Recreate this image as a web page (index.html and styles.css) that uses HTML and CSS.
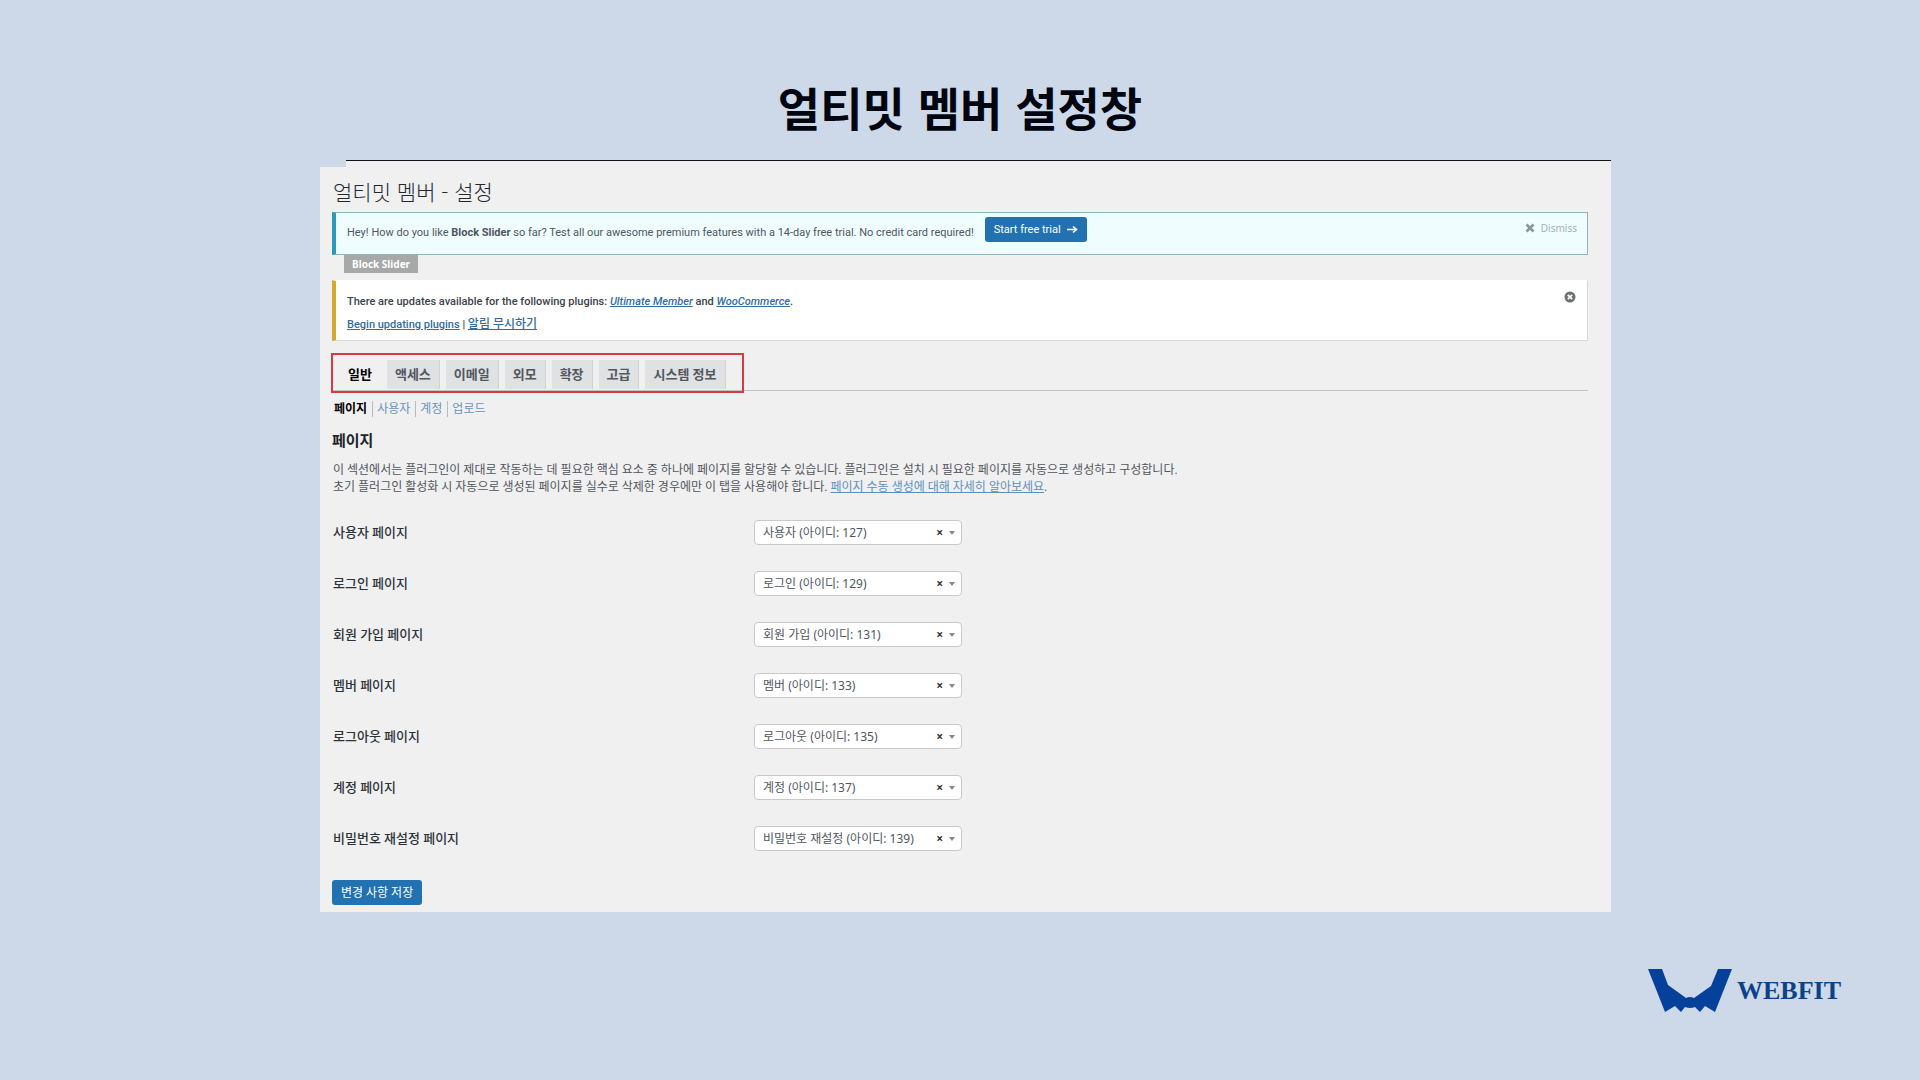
FILE: index.html
```html
<!DOCTYPE html>
<html lang="ko">
<head>
<meta charset="utf-8">
<title>얼티밋 멤버 설정창</title>
<link rel="stylesheet" href="styles.css">
</head>
<body>
<h1 class="slide-title">얼티밋 멤버 설정창</h1>
<main class="frame">
  <div class="rule"></div>
  <div class="panel">
    <h2 class="page-title">얼티밋 멤버 - 설정</h2>

    <section class="notice notice-info">
      <p>Hey! How do you like <strong>Block Slider</strong> so far? Test all our awesome premium features with a 14-day free trial. No credit card required!</p>
      <button type="button" class="btn btn-trial">Start free trial
        <svg width="11" height="9" viewBox="0 0 11 9"><path d="M0 4.5H9M6 1.5L9.5 4.5L6 7.5" fill="none" stroke="currentColor" stroke-width="1.6"/></svg>
      </button>
      <button type="button" class="dismiss">
        <svg width="10" height="10" viewBox="0 0 10 10"><path d="M1.5 1.5L8.5 8.5M8.5 1.5L1.5 8.5" stroke="#8b9698" stroke-width="2.6"/></svg>
        Dismiss
      </button>
    </section>
    <span class="notice-tag">Block Slider</span>

    <section class="notice notice-warning">
      <div class="notice-body">
        <p>There are updates available for the following plugins: <a href="#" class="plugin">Ultimate Member</a> and <a href="#" class="plugin">WooCommerce</a>.</p>
        <p><a href="#">Begin updating plugins</a> | <a href="#" class="ignore">알림 무시하기</a></p>
      </div>
      <button type="button" class="close" aria-label="닫기">
        <svg width="12" height="12" viewBox="0 0 12 12"><circle cx="6" cy="6" r="5.5" fill="#6d7073"/><path d="M3.8 3.8L8.2 8.2M8.2 3.8L3.8 8.2" stroke="#fff" stroke-width="1.8"/></svg>
      </button>
    </section>

    <div class="tab-row">
      <nav class="tabs">
        <a href="#" class="tab active">일반</a>
        <a href="#" class="tab">액세스</a>
        <a href="#" class="tab">이메일</a>
        <a href="#" class="tab">외모</a>
        <a href="#" class="tab">확장</a>
        <a href="#" class="tab">고급</a>
        <a href="#" class="tab">시스템 정보</a>
      </nav>
    </div>
    <nav class="subnav">
      <a href="#" class="current">페이지</a><a href="#">사용자</a><a href="#">계정</a><a href="#">업로드</a>
    </nav>

    <h3 class="section-title">페이지</h3>
    <p class="description">이 섹션에서는 플러그인이 제대로 작동하는 데 필요한 핵심 요소 중 하나에 페이지를 할당할 수 있습니다. 플러그인은 설치 시 필요한 페이지를 자동으로 생성하고 구성합니다.<br>초기 플러그인 활성화 시 자동으로 생성된 페이지를 실수로 삭제한 경우에만 이 탭을 사용해야 합니다. <a href="#">페이지 수동 생성에 대해 자세히 알아보세요</a>.</p>

    <form class="settings">
      <div class="row"><label for="p-user">사용자 페이지</label>
        <div class="field"><select id="p-user"><option>사용자 (아이디: 127)</option></select><button type="button" class="clear" aria-label="지우기">×</button><span class="caret"></span></div></div>
      <div class="row"><label for="p-login">로그인 페이지</label>
        <div class="field"><select id="p-login"><option>로그인 (아이디: 129)</option></select><button type="button" class="clear" aria-label="지우기">×</button><span class="caret"></span></div></div>
      <div class="row"><label for="p-register">회원 가입 페이지</label>
        <div class="field"><select id="p-register"><option>회원 가입 (아이디: 131)</option></select><button type="button" class="clear" aria-label="지우기">×</button><span class="caret"></span></div></div>
      <div class="row"><label for="p-members">멤버 페이지</label>
        <div class="field"><select id="p-members"><option>멤버 (아이디: 133)</option></select><button type="button" class="clear" aria-label="지우기">×</button><span class="caret"></span></div></div>
      <div class="row"><label for="p-logout">로그아웃 페이지</label>
        <div class="field"><select id="p-logout"><option>로그아웃 (아이디: 135)</option></select><button type="button" class="clear" aria-label="지우기">×</button><span class="caret"></span></div></div>
      <div class="row"><label for="p-account">계정 페이지</label>
        <div class="field"><select id="p-account"><option>계정 (아이디: 137)</option></select><button type="button" class="clear" aria-label="지우기">×</button><span class="caret"></span></div></div>
      <div class="row"><label for="p-reset">비밀번호 재설정 페이지</label>
        <div class="field"><select id="p-reset"><option>비밀번호 재설정 (아이디: 139)</option></select><button type="button" class="clear" aria-label="지우기">×</button><span class="caret"></span></div></div>
      <button type="submit" class="btn btn-save">변경 사항 저장</button>
    </form>
  </div>
</main>
<footer class="brand">
  <svg width="84" height="44" viewBox="0 0 84 44"><path d="M0 0H14L20 16L38 29Q42 27 46 29L63 17L70 0H84L67 43L57 37L52 43L47 38Q42 40 37 38L33 43L27 37L17 43Z" fill="#05409a"/></svg>
  <span>WEBFIT</span>
</footer>
</body>
</html>
```

FILE: styles.css
```css
* { box-sizing: border-box; }

body {
  margin: 0;
  min-height: 100vh;
  background: #cdd9e9;
  color: #50575e;
  font: 12px/16px Roboto, "Noto Sans CJK KR", sans-serif;
}

h1, h2, h3, p { margin: 0; }
button, select { font: inherit; }
button { cursor: pointer; }
a { color: #2f6ea3; }

.slide-title {
  padding: 70px 0 18px;
  color: #000610;
  font: 700 46px/72px "Noto Sans CJK KR", sans-serif;
  text-align: center;
}

.frame { padding: 0 309px 0 320px; }

.rule {
  height: 7px;
  margin-left: 26px;
  border-top: 1px solid #10141a;
  background: #f0f0f1;
}

.panel {
  padding: 6px 23px 7px 12px;
  background: #f0f0f1;
}

.page-title {
  padding: 0 0 2px 1px;
  color: #23282d;
  font: 300 21px/37px "Noto Sans CJK KR", sans-serif;
}

.notice {
  display: flex;
  border: 1px solid #d8d9da;
  border-left: 4px solid #d5a92f;
  font-size: 11px;
}

.notice-info {
  height: 43px;
  padding: 4px 10px 0 11px;
  border-color: #8db3bd;
  border-left-color: #2c9ab7;
  background: #effdff;
}
.notice-info p { padding-top: 8px; }

.btn {
  border: 0;
  border-radius: 3px;
  background: #2271b1;
  color: #fff;
}

.btn-trial {
  display: flex;
  align-items: center;
  gap: 6px;
  height: 25px;
  margin-left: 11px;
  padding: 0 9px;
  white-space: nowrap;
}

.dismiss {
  display: flex;
  align-items: center;
  gap: 6px;
  height: 22px;
  margin-left: auto;
  padding: 0;
  border: 0;
  background: none;
  color: #a3b0b2;
  font-family: "Noto Sans", sans-serif;
  font-size: 10px;
}

.notice-tag {
  display: block;
  width: max-content;
  margin: 0 0 7px 12px;
  padding: 0 8px;
  background: #a7a8a8;
  color: #fff;
  font-family: "Noto Sans", sans-serif;
  font-size: 10px;
  font-weight: 700;
  line-height: 18px;
}

.notice-warning {
  justify-content: space-between;
  height: 61px;
  padding: 10px 11px 0;
  border-top-color: #fff;
  background: #fff;
  color: #3c434a;
  font-weight: 500;
}
.notice-body { line-height: 22px; }
.notice-body .plugin { font-style: italic; }
.notice-body .ignore { font-size: 12px; }

.close {
  height: 12px;
  padding: 0;
  border: 0;
  background: none;
  line-height: 0;
}

.tab-row {
  display: flex;
  margin: 12px 0 0 -1px;
  border-bottom: 1px solid #c3c4c7;
}

.tabs {
  display: flex;
  gap: 6px;
  margin-bottom: -3px;
  padding: 5px 16px 2px 4px;
  border: 2px solid #d93a41;
}

.tab {
  padding: 0 8px;
  border-right: 1px solid #cfd1d2;
  background: #e0e1e2;
  color: #50575e;
  font-size: 13px;
  font-weight: 700;
  line-height: 29px;
  text-decoration: none;
}
.tab.active {
  padding-left: 11px;
  border-color: #f0f0f1;
  background: #f0f0f1;
  color: #000;
}

.subnav {
  display: flex;
  margin: 10px 0 0 2px;
}
.subnav a {
  color: #6a93bb;
  text-decoration: none;
}
.subnav a + a {
  margin-left: 5px;
  padding-left: 4px;
  border-left: 1px solid #b8bbbe;
}
.subnav .current { color: #000; font-weight: 700; }

.section-title {
  margin-top: 14px;
  color: #1d2327;
  font-size: 15px;
  line-height: 20px;
}

.description {
  margin-top: 11px;
  padding-left: 1px;
  line-height: 17px;
}
.description a { color: #5f8fb9; }

.settings {
  margin-top: 11px;
}

.row {
  display: grid;
  grid-template-columns: 422px 1fr;
  align-items: center;
  height: 51px;
}
.row label {
  padding-left: 1px;
  color: #2c3338;
  font-size: 13px;
  font-weight: 500;
}

.field {
  display: flex;
  align-items: center;
  width: 208px;
  height: 25px;
  padding: 0 6px 0 8px;
  border: 1px solid #c8c9cb;
  border-radius: 4px;
  background: #fff;
  font-family: "Noto Sans", "Noto Sans CJK KR", sans-serif;
}
.field select {
  flex: 1;
  min-width: 0;
  padding: 0;
  border: 0;
  background: none;
  color: #50575e;
  appearance: none;
}

.clear {
  padding: 0;
  border: 0;
  background: none;
  color: #333;
  font-weight: 700;
}

.caret {
  margin-left: 6px;
  border: 3px solid transparent;
  border-top: 4px solid #888;
  border-bottom: 0;
}

.btn-save {
  height: 25px;
  margin-top: 16px;
  padding: 0 9px;
}

.brand {
  display: flex;
  justify-content: flex-end;
  align-items: center;
  gap: 5px;
  padding: 57px 79px 0 0;
  color: #0b4289;
  font: 700 26px/44px "Liberation Serif", serif;
}
```
